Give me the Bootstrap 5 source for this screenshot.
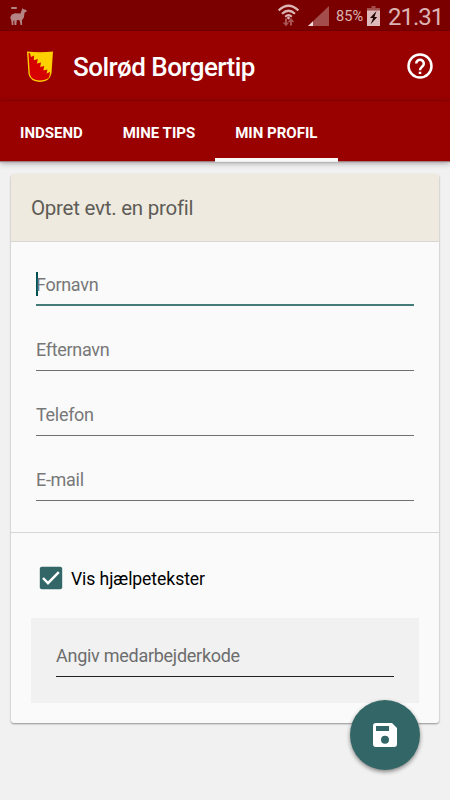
<!DOCTYPE html>
<html lang="da">
<head>
<meta charset="utf-8">
<meta name="viewport" content="width=device-width, initial-scale=1">
<title>Solrød Borgertip</title>
<link href="https://cdn.jsdelivr.net/npm/bootstrap@5.3.0/dist/css/bootstrap.min.css" rel="stylesheet">
<style>
  body { font-family: Roboto, "Liberation Sans", sans-serif; background: #f1f1f1; color: #000; height: 800px; line-height: 1; overflow: hidden; }
  .statusbar { height: 31px; background: #7a0000; color: #dcb4b4; box-shadow: inset 0 -1px 0 #700000; }
  .statusbar svg, .appbar svg { display: block; flex: none; }
  .lama { margin-left: 9px; }
  .wifi { margin-left: 250px; }
  .signal { margin-left: 9px; }
  .pct { font-size: 14.6px; margin-left: 7px; width: 31px; padding-top: 2px; }
  .clock { font-size: 24px; margin-left: 8px; padding-top: 3px; letter-spacing: -1px; }
  .appbar { height: 70px; background: #990000; color: #fff; border-bottom: 1px solid #8b0000; padding: 0 17px 0 25px; }
  .apptitle { font-size: 26px; font-weight: 500; margin-left: 18px; padding-top: 2px; white-space: nowrap; letter-spacing: -.55px; }
  .tabs { height: 60px; background: #990000; box-shadow: 0 1px 1px #a08080, 0 2px 6px rgba(0,0,0,.35); }
  .tabs .nav-link { color: #fff; font-size: 15px; font-weight: 700; padding: 25px 20px 0; height: 60px; white-space: nowrap; line-height: 15px; }
  .tabs .nav-link.active { width: 123px; box-shadow: inset 0 -3px 0 #f8f8f8, 0 1px 0 #eee; }
  .panel { margin: 13px 11px 0; border: 0; border-radius: 3px; background: #fafafa; height: 549px; box-shadow: 0 1px 2px rgba(0,0,0,.4); }
  .panel-title { height: 68px; background: #eeeadf; border-bottom: 1px solid #d7d6d2; border-radius: 3px 3px 0 0; font-size: 20.5px; letter-spacing: -.25px; color: #5e5c57; padding: 2px 20px 0; }
  .fields { padding: 0 25px; height: 291px; border-bottom: 1px solid #d6d6d6; }
  .field { height: 65px; border-bottom: 1px solid #6f6f6f; color: #777; font-size: 18px; letter-spacing: -.3px; padding-bottom: 11px; }
  .field:first-child { height: 64px; border-bottom: 2px solid #447a78; padding-bottom: 10px; }
  .caret { width: 2px; height: 24px; background: #00504d; margin: 0 -2px -2px 0; }
  .checkrow { height: 85px; padding: 5px 0 0 28px; font-size: 17.6px; letter-spacing: -.08px; }
  .checkrow span { padding-top: 3px; }
  .checkrow svg { margin-right: 8px; }
  .codebox { margin: 0 20px; height: 85px; background: #f1f1f1; padding: 0 25px; }
  .codebox .code { height: 59px; border-bottom: 1px solid #222; color: #6d6d6d; font-size: 18px; letter-spacing: -.27px; padding-bottom: 11px; }
  .fab { position: absolute; left: 350px; top: 700px; width: 70px; height: 70px; border: 0; background: #336666; box-shadow: 0 2px 4px rgba(0,0,0,.45); }
</style>
</head>
<body>
<div class="statusbar d-flex align-items-center">
  <svg class="lama" width="19" height="20" viewBox="0 0 19 20" fill="#b58484"><rect x="2" y="1" width="6" height="2" rx="1"/><path d="M13.500 2l1 1.200 2.800.8.300 1.800-2 .8-.7 4.800-2 2.800.2 4.800h-1.500l-1-4.800-2.800-.3-.5 5H5.500L5.200 14l-1 1.500.3 3.500H2.800l-.6-5-1-2.500L2.800 8.500 6 7.200l5.500.2z"/></svg>
  <svg class="wifi" width="21" height="24" viewBox="0 0 21 24" fill="none" stroke="#dcb4b4" stroke-width="2.200"><path d="M.6 6.500Q10.500-3 20.400 6.500M4 9.700Q10.500 3.800 17 9.700M7.200 12.700Q10.500 9.700 13.800 12.700"/><circle cx="10.500" cy="14" r="1.400" fill="#dcb4b4" stroke="none"/><path d="M8 14.500v5M13 21.500v-5" stroke="#a95555" stroke-width="2"/><path d="M4.700 18.500h6.600L8 22.300zM9.700 18h6.600L13 14z" fill="#a95555" stroke="none"/></svg>
  <svg class="signal" width="21" height="22" viewBox="0 0 21 22"><path d="M0 21L21 1v20z" fill="#a44d4d"/><path d="M0 21l5-4.800V21z" fill="#f0dada"/></svg>
  <span class="pct">85%</span>
  <svg width="13" height="20" viewBox="0 0 13 20"><path d="M0 3h13v17H0z" fill="#dfbaba"/><path d="M4.500 0h4v2H13v2.500H0V2h4.500z" fill="#a44d4d"/><path d="M9.500 5L3 12h3.200L3.500 18.500 10.200 11H7.400z" fill="#220707"/></svg>
  <span class="clock">21.31</span>
</div>
<header class="appbar d-flex align-items-center">
  <svg width="30" height="34" viewBox="0 0 30 34"><path d="M2 2.500Q15 4 28 2.500L26.500 24Q25 32.500 15 33Q5 32.500 3.500 25z" fill="#ffd000"/><path d="M3.500 4l1.500.3 1 3.700 3-1.500-.2 4.700 4-1.200-.8 4.500 4-1-.8 4.500 4-1-.8 4.500 4-1-.8 4 3.500-1.500-.5 3.500Q24 31 15 31.500Q6 31 4.800 25z" fill="#d50000"/></svg>
  <span class="apptitle">Solrød Borgertip</span>
  <svg class="ms-auto" width="26" height="26" viewBox="0 0 26 26" fill="none" stroke="#fff" stroke-width="2.500"><circle cx="13" cy="13" r="11.500"/><path d="M9.200 10.500a3.800 3.800 0 1 1 6.500 2.700C14.200 14.700 13 15 13 17.300M13 18.700v2.300"/></svg>
</header>
<nav class="tabs nav flex-nowrap">
  <a class="nav-link" href="#">INDSEND</a>
  <a class="nav-link" href="#">MINE TIPS</a>
  <a class="nav-link active" href="#">MIN PROFIL</a>
</nav>
<main class="panel card">
  <div class="panel-title d-flex align-items-center"><span>Opret evt. en profil</span></div>
  <div class="fields">
    <div class="field d-flex align-items-end"><i class="caret"></i><span>Fornavn</span></div>
    <div class="field d-flex align-items-end"><span>Efternavn</span></div>
    <div class="field d-flex align-items-end"><span>Telefon</span></div>
    <div class="field d-flex align-items-end"><span>E-mail</span></div>
  </div>
  <div class="checkrow d-flex align-items-center">
    <svg width="24" height="24" viewBox="0 0 24 24"><rect x=".8" y=".8" width="22.400" height="22.400" rx="2" fill="#336666"/><path d="M4 12l5 5.200L19.800 6.200" fill="none" stroke="#fff" stroke-width="2.500"/></svg>
    <span>Vis hjælpetekster</span>
  </div>
  <div class="codebox"><div class="code d-flex align-items-end"><span>Angiv medarbejderkode</span></div></div>
</main>
<button class="fab rounded-circle d-flex align-items-center justify-content-center p-0" type="button" aria-label="Gem">
  <svg width="24" height="24" viewBox="0 0 24 24"><path fill-rule="evenodd" fill="#fff" d="M3 0h16l5 5v16a3 3 0 0 1-3 3H3a3 3 0 0 1-3-3V3a3 3 0 0 1 3-3zM3 3v5h13V3zM12 12.700a4 4 0 1 0 0 8 4 4 0 0 0 0-8z"/></svg>
</button>
<script src="https://cdn.jsdelivr.net/npm/bootstrap@5.3.0/dist/js/bootstrap.bundle.min.js"></script>
</body>
</html>
